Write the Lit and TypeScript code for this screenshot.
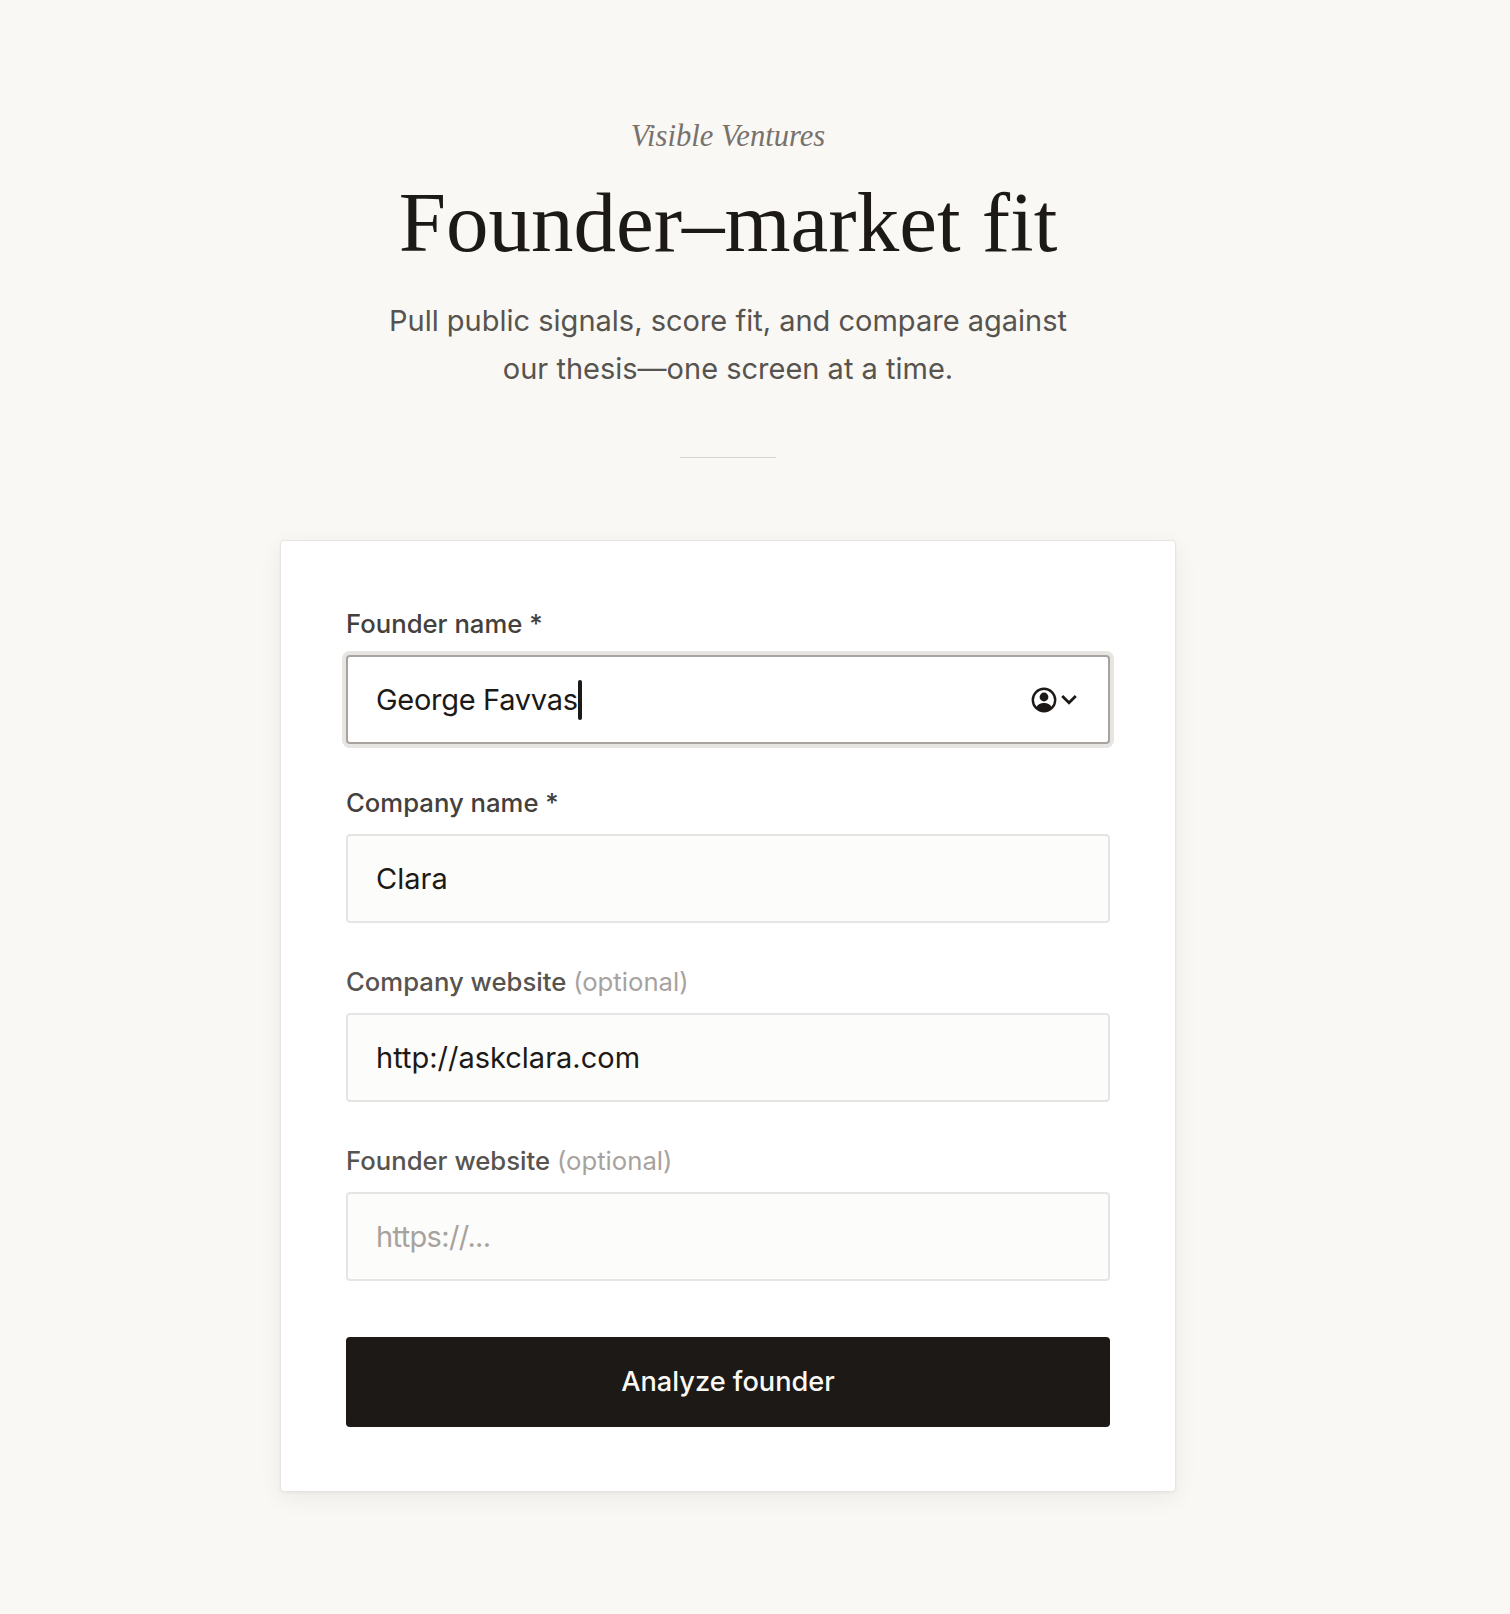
import { LitElement, html, css } from "lit";
import { customElement } from "lit/decorators.js";

@customElement("app-root")
export class AppRoot extends LitElement {
  static styles = css`
    :host {
      display: block;
      min-height: 1614px;
      background: #f9f8f5;
      font-family: Inter, "Noto Sans", sans-serif;
      color: #1c1917;
    }
    .page {
      width: 1456px;
      padding-top: 118px;
      display: flex;
      flex-direction: column;
      align-items: center;
      box-sizing: border-box;
    }
    .eyebrow {
      font-family: "Liberation Serif", serif;
      font-style: italic;
      font-size: 30.6px;
      line-height: 36px;
      color: #78716c;
    }
    h1 {
      margin: 24px 0 0;
      font-family: "Liberation Serif", serif;
      font-weight: 400;
      font-size: 85px;
      line-height: 88px;
      color: #1c1917;
    }
    .sub {
      margin: 31px 0 0;
      font-size: 29px;
      line-height: 48px;
      color: #57534e;
      text-align: center;
    }
    .rule {
      width: 96px;
      height: 1px;
      margin: 64px 0 0;
      background: #d6d3d1;
    }
    .card {
      box-sizing: border-box;
      width: 896px;
      margin-top: 82px;
      padding: 65px 65px 64px;
      background: #fff;
      border: 1px solid #e7e5e4;
      border-radius: 4px;
      box-shadow: 0 1px 3px rgba(28, 25, 23, 0.05), 0 6px 24px rgba(28, 25, 23, 0.06);
      display: flex;
      flex-direction: column;
      gap: 41px;
    }
    .field {
      display: flex;
      flex-direction: column;
      gap: 13px;
    }
    label {
      font-size: 25.7px;
      line-height: 36px;
      font-weight: 450;
      color: #57534e;
    }
    label.req {
      color: #44403c;
    }
    label span {
      font-weight: 400;
      color: #a8a29e;
    }
    .input {
      box-sizing: border-box;
      width: 100%;
      height: 89px;
      padding: 0 31px 0 28px;
      font: 400 29px Inter, "Noto Sans", sans-serif;
      color: #1c1917;
      background: #fcfcfa;
      border: 2px solid #e7e5e4;
      border-radius: 4px;
      outline: none;
    }
    .input::placeholder {
      color: #a8a29e;
      letter-spacing: -0.65px;
    }
    .focused {
      display: flex;
      align-items: center;
      letter-spacing: -0.3px;
      background: #fff;
      border-color: #a8a29e;
      box-shadow: 0 0 0 4px #e7e5e2;
    }
    .caret {
      width: 4px;
      height: 40px;
      border-radius: 2px;
      background: #1c1917;
    }
    .icon {
      margin-left: auto;
      display: flex;
      align-items: center;
      gap: 4px;
    }
    button {
      height: 90px;
      margin-top: 15px;
      padding: 0 0 2px;
      border: 0;
      border-radius: 4px;
      background: #1c1917;
      color: #faf9f6;
      font: 450 27.2px Inter, "Noto Sans", sans-serif;
    }
  `;

  render() {
    return html`
      <div class="page">
        <div class="eyebrow">Visible Ventures</div>
        <h1>Founder–market fit</h1>
        <p class="sub">Pull public signals, score fit, and compare against<br />our thesis—one screen at a time.</p>
        <div class="rule"></div>
        <form class="card">
          <div class="field">
            <label class="req">Founder name *</label>
            <div class="input focused">
              George Favvas<i class="caret"></i>
              <div class="icon">
                <svg width="26" height="26" viewBox="0 0 26 26">
                  <circle cx="13" cy="13" r="11.2" fill="none" stroke="#1c1917" stroke-width="2.4" />
                  <circle cx="13" cy="10" r="4.4" fill="#1c1917" />
                  <path d="M5.2 20.5C7 17 10 16 13 16s6 1 7.8 4.5A11 11 0 0 1 13 24a11 11 0 0 1-7.8-3.5z" fill="#1c1917" />
                </svg>
                <svg width="16" height="11" viewBox="0 0 16 11">
                  <path d="M1.2 2 8 8.8 14.8 2" fill="none" stroke="#1c1917" stroke-width="2.8" />
                </svg>
              </div>
            </div>
          </div>
          <div class="field">
            <label class="req">Company name *</label>
            <input class="input" value="Clara" />
          </div>
          <div class="field">
            <label>Company website <span>(optional)</span></label>
            <input class="input" value="http://askclara.com" />
          </div>
          <div class="field">
            <label>Founder website <span>(optional)</span></label>
            <input class="input" placeholder="https://..." />
          </div>
          <button type="button">Analyze founder</button>
        </form>
      </div>
    `;
  }
}
